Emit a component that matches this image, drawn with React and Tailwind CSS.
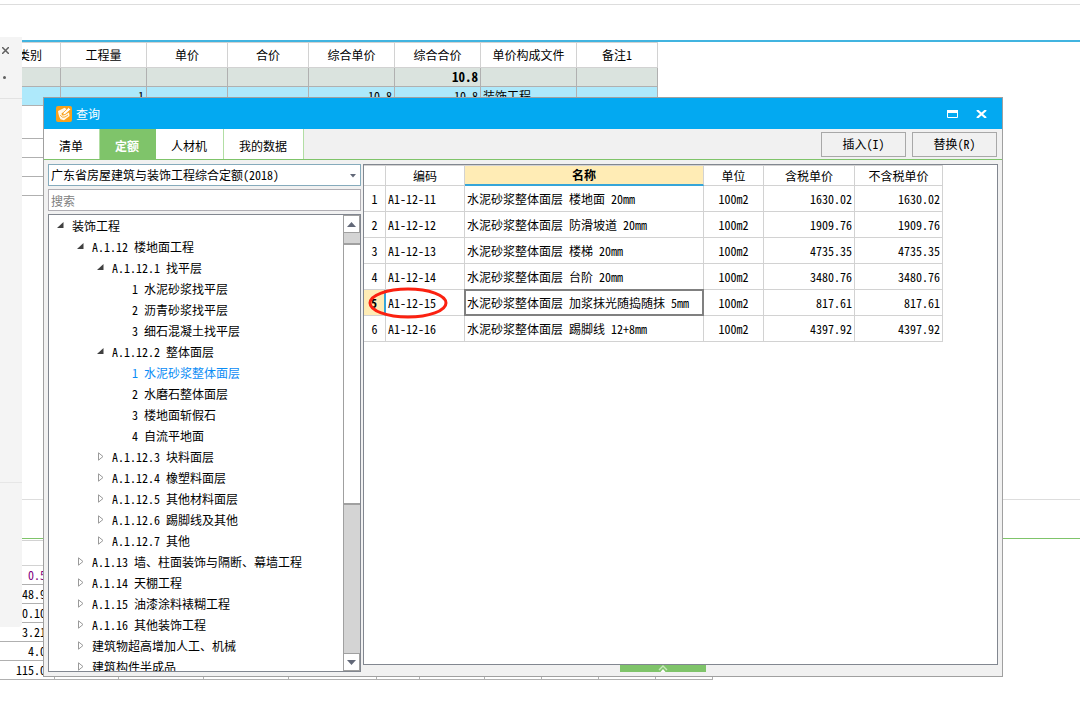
/**
 * Quota query dialog floating over the bill-of-quantities workspace.
 */
import { useState } from 'react';

const BILL_COLUMNS = [
  { name: '类别', width: 'w-[61px]' },
  { name: '工程量', width: 'w-[86px]' },
  { name: '单价', width: 'w-[81px]' },
  { name: '合价', width: 'w-[81px]' },
  { name: '综合单价', width: 'w-[86px]' },
  { name: '综合合价', width: 'w-[86px]' },
  { name: '单价构成文件', width: 'w-[96px]' },
  { name: '备注1', width: 'w-[81px]' },
];

const BILL_TOTAL = ['', '', '', '', '', '10.8', '', ''];
const BILL_ITEM = ['', '1', '', '', '10.8', '10.8', '装饰工程', ''];

const DETAIL_COLUMNS = [
  'w-[55px]', 'w-[64px]', 'w-[85px]', 'w-[85px]', 'w-[88px]', 'w-[43px]',
  'w-[65px]', 'w-[57px]', 'w-[57px]', 'w-[57px]', 'w-[57px]',
];

const DETAIL_VALUES = ['0.5', '48.9', '0.10', '3.21', '4.0', '115.0'];

const TABS = ['清单', '定额', '人材机', '我的数据'];

const TREE = [
  { level: 0, label: '装饰工程', state: 'open' },
  { level: 1, label: 'A.1.12 楼地面工程', state: 'open' },
  { level: 2, label: 'A.1.12.1 找平层', state: 'open' },
  { level: 3, label: '1 水泥砂浆找平层' },
  { level: 3, label: '2 沥青砂浆找平层' },
  { level: 3, label: '3 细石混凝土找平层' },
  { level: 2, label: 'A.1.12.2 整体面层', state: 'open' },
  { level: 3, label: '1 水泥砂浆整体面层' },
  { level: 3, label: '2 水磨石整体面层' },
  { level: 3, label: '3 楼地面斩假石' },
  { level: 3, label: '4 自流平地面' },
  { level: 2, label: 'A.1.12.3 块料面层', state: 'closed' },
  { level: 2, label: 'A.1.12.4 橡塑料面层', state: 'closed' },
  { level: 2, label: 'A.1.12.5 其他材料面层', state: 'closed' },
  { level: 2, label: 'A.1.12.6 踢脚线及其他', state: 'closed' },
  { level: 2, label: 'A.1.12.7 其他', state: 'closed' },
  { level: 1, label: 'A.1.13 墙、柱面装饰与隔断、幕墙工程', state: 'closed' },
  { level: 1, label: 'A.1.14 天棚工程', state: 'closed' },
  { level: 1, label: 'A.1.15 油漆涂料裱糊工程', state: 'closed' },
  { level: 1, label: 'A.1.16 其他装饰工程', state: 'closed' },
  { level: 1, label: '建筑物超高增加人工、机械', state: 'closed' },
  { level: 1, label: '建筑构件半成品', state: 'closed' },
];

const INDENT = ['pl-2', 'pl-7', 'pl-12', 'pl-[68px]'];

const QUOTAS = [
  { code: 'A1-12-11', name: '水泥砂浆整体面层 楼地面 20mm', price: '1630.02' },
  { code: 'A1-12-12', name: '水泥砂浆整体面层 防滑坡道 20mm', price: '1909.76' },
  { code: 'A1-12-13', name: '水泥砂浆整体面层 楼梯 20mm', price: '4735.35' },
  { code: 'A1-12-14', name: '水泥砂浆整体面层 台阶 20mm', price: '3480.76' },
  { code: 'A1-12-15', name: '水泥砂浆整体面层 加浆抹光随捣随抹 5mm', price: '817.61' },
  { code: 'A1-12-16', name: '水泥砂浆整体面层 踢脚线 12+8mm', price: '4397.92' },
];

function AppIcon() {
  return (
    <svg width="16" height="16" viewBox="0 0 16 16" aria-hidden="true">
      <rect width="16" height="16" rx="2" fill="#f9a11b" />
      <path d="M2 5 L8.5 1.8 L11 3.4 L5.5 7.5 L6 9.5 L8.5 9 L13 6.5 L13.5 10 L8 14.2 L4.5 13.2 L3.2 10.5 L2.5 8 Z" fill="#fff8e8" />
      <path d="M6.8 8.8 L7.2 6.8 L12.6 1.6 L14.8 3.4 L9 8.6 Z" fill="#fff" stroke="#f9a11b" strokeWidth="0.8" />
      <path d="M4.2 9 Q6 12.4 9 11 L12 9" fill="none" stroke="#f9a11b" strokeWidth="0.9" />
    </svg>
  );
}

function TreeArrow({ state }) {
  return (
    <svg width="7" height="9" viewBox="0 0 7 9" className="shrink-0" aria-hidden="true">
      {state === 'open' && <path d="M6.5 1 V7 H0 Z" fill="#404040" />}
      {state === 'closed' && <path d="M1.5 0.8 L6 4.5 L1.5 8.2 Z" fill="#fff" stroke="#9a9a9a" />}
    </svg>
  );
}

function BillTable() {
  const cell = 'p-0 px-[2px] border-r border-b border-[#b0b0b0]';

  return (
    <table className="table-fixed border-separate border-spacing-0 w-[658px] border-t border-[#d2d2d2]">
      <thead>
        <tr className="h-[25px]">
          {BILL_COLUMNS.map((c) => (
            <th key={c.name} className={`${c.width} p-0 font-normal border-r border-b border-[#d2d2d2]`}>
              {c.name}
            </th>
          ))}
        </tr>
      </thead>
      <tbody>
        <tr className="h-[19px] bg-[#dae3de] font-bold text-[13px]">
          {BILL_TOTAL.map((v, i) => (
            <td key={i} className={`${cell} text-right`}>{v}</td>
          ))}
        </tr>
        <tr className="h-[19px] bg-[#aee9fb]">
          {BILL_ITEM.map((v, i) => (
            <td key={i} className={`${cell} ${i === 6 ? 'text-left' : 'text-right'}`}>{v}</td>
          ))}
        </tr>
      </tbody>
    </table>
  );
}

function DetailTable() {
  return (
    <table className="table-fixed border-separate border-spacing-0 w-[713px]">
      <tbody>
        {DETAIL_VALUES.map((v, row) => (
          <tr key={v} className="h-[19px]">
            {DETAIL_COLUMNS.map((w, i) => (
              <td
                key={i}
                className={`${w} p-0 pr-2 text-right border-r border-b border-[#b0b0b0] ${row === 0 ? 'text-[#800080]' : ''}`}
              >
                {i === 0 ? v : ''}
              </td>
            ))}
          </tr>
        ))}
      </tbody>
    </table>
  );
}

function Workspace() {
  return (
    <div className="relative h-full flex flex-col">
      <div className="h-[5px] shrink-0 border-b border-[#dddddd]" />
      <div className="h-[35px] shrink-0" />
      <div className="h-[2px] shrink-0 ml-[22px] bg-[#41b4e0]" />
      <BillTable />
      <div className="h-[14px] shrink-0" />
      {[0, 1, 2, 3].map((i) => (
        <div key={i} className="h-[19px] shrink-0 w-[60px] border-b border-[#b0b0b0]" />
      ))}
      <div className="h-[304px] shrink-0 border-b border-[#dddddd]" />
      <div className="h-[38px] shrink-0" />
      <div className="h-px shrink-0 bg-[#7fc46a]" />
      <div className="h-[26px] shrink-0 w-[60px] border-y border-[#d2d2d2] mt-px" />
      <DetailTable />

      {/* Collapsed side panel, covers the left edge of both tables */}
      <aside className="absolute left-0 top-[37px] w-[22px] h-[590px] bg-[#f4f4f4] rounded-br-sm flex flex-col">
        <button aria-label="关闭面板" className="h-[27px] pl-[2px] text-[#606060]">
          <svg width="7" height="7" viewBox="0 0 7 7">
            <path d="M0 0 L7 7 M7 0 L0 7" stroke="currentColor" strokeWidth="1.5" />
          </svg>
        </button>
        <div className="h-[35px] border-b border-[#e2e2e2] pl-[3px] pt-3">
          <div className="size-[3px] rounded-full bg-[#606060]" />
        </div>
        <div className="h-[384px] border-b border-[#e6e6e6]" />
      </aside>
    </div>
  );
}

function TitleBar() {
  return (
    <header className="h-[31px] shrink-0 bg-[#03a9f1] text-white flex items-center pl-3 pr-[15px]">
      <AppIcon />
      <h1 className="ml-1 flex-1">查询</h1>
      <button aria-label="最大化" className="mr-[18px]">
        <svg width="11" height="8" viewBox="0 0 11 8" className="block">
          <path d="M0.5 0.5 H10.5 V7.5 H0.5 Z" fill="none" stroke="#fff" />
          <path d="M0 0 H11 V3 H0 Z" fill="#fff" />
        </svg>
      </button>
      <button aria-label="关闭">
        <svg width="11" height="8" viewBox="0 0 11 8" className="block">
          <path d="M1 0 L10 8 M10 0 L1 8" stroke="#fff" strokeWidth="2.2" />
        </svg>
      </button>
    </header>
  );
}

function TabBar({ active, onChange }) {
  return (
    <div className="h-[30px] shrink-0 flex items-stretch bg-[#f1f1f1]">
      <nav className="flex">
        {TABS.map((t) => (
          <button
            key={t}
            onClick={() => onChange(t)}
            className={`pl-[15px] pr-4 pt-[3px] border-r ${
              active === t
                ? 'bg-[#7fc46a] border-[#7fc46a] text-white font-bold'
                : 'bg-white border-[#b2dea4]'
            }`}
          >
            {t}
          </button>
        ))}
      </nav>
      <div className="ml-auto mr-[5px] flex items-center gap-[6px]">
        <button className="w-[85px] h-[25px] border border-[#a8a8a8] bg-[#f1f1f1]">插入(I)</button>
        <button className="w-[85px] h-[25px] border border-[#a8a8a8] bg-[#f1f1f1]">替换(R)</button>
      </div>
    </div>
  );
}

function ScrollBar() {
  return (
    <div className="w-[17px] shrink-0 flex flex-col border-l border-[#a0a0a0] bg-[#d4d4d4]">
      <button aria-label="向上滚动" className="h-[18px] shrink-0 flex items-center justify-center bg-white border-y border-r border-[#a0a0a0]">
        <svg width="9" height="5" viewBox="0 0 9 5"><path d="M4.5 0 L9 5 H0 Z" fill="#626878" /></svg>
      </button>
      <div className="flex-1 pt-[10px]">
        <div className="h-[262px] bg-white border-y-2 border-[#a0a0a0]" />
      </div>
      <button aria-label="向下滚动" className="h-[18px] shrink-0 flex items-center justify-center bg-white border-y border-r border-[#a0a0a0]">
        <svg width="9" height="5" viewBox="0 0 9 5"><path d="M0 0 H9 L4.5 5 Z" fill="#626878" /></svg>
      </button>
    </div>
  );
}

function QuotaTree() {
  const [selected, setSelected] = useState('1 水泥砂浆整体面层');

  return (
    <div className="flex-1 min-h-0 flex bg-white border border-[#828790]">
      <ul className="flex-1 min-w-0 overflow-hidden">
        {TREE.map((n) => (
          <li key={n.label}>
            <button
              onClick={() => setSelected(n.label)}
              className={`w-full h-[21px] flex items-center gap-2 whitespace-nowrap ${INDENT[n.level]} ${
                selected === n.label ? 'text-[#0a8cf5]' : ''
              }`}
            >
              <TreeArrow state={n.state} />
              <span className="whitespace-pre">{n.label}</span>
            </button>
          </li>
        ))}
      </ul>
      <ScrollBar />
    </div>
  );
}

function QuotaTable() {
  const cell = 'p-0 border-r border-b border-[#d2d2d2]';
  const current = 4;

  return (
    <table className="table-fixed border-separate border-spacing-0 w-[579px] border-t border-[#d2d2d2]">
      <thead>
        <tr className="h-5">
          <th className={`${cell} w-[22px]`} />
          <th className={`${cell} w-[79px] font-normal`}>编码</th>
          <th className="w-[239px] p-0 border-r border-r-[#d2d2d2] border-b-2 border-b-[#36a5d8] bg-[#ffecb5] font-bold">名称</th>
          <th className={`${cell} w-[60px] font-normal`}>单位</th>
          <th className={`${cell} w-[91px] font-normal`}>含税单价</th>
          <th className={`${cell} w-[88px] font-normal`}>不含税单价</th>
        </tr>
      </thead>
      <tbody>
        {QUOTAS.map((q, i) => (
          <tr key={q.code} className="h-[26px]">
            <td
              className={
                i === current
                  ? 'p-0 text-center font-bold bg-[#ffecb5] border-r-2 border-r-[#36a5d8] border-b border-b-[#d2d2d2]'
                  : `${cell} text-center`
              }
            >
              {i + 1}
            </td>
            <td className={`${cell} relative pl-[2px]`}>
              {q.code}
              {i === current && (
                <svg className="absolute z-10 -left-[18px] -top-[3px]" width="80" height="32" viewBox="0 0 80 32" aria-hidden="true">
                  <ellipse cx="40" cy="16" rx="38" ry="14" fill="none" stroke="#fb2110" strokeWidth="3" />
                </svg>
              )}
            </td>
            <td className={`${cell} relative pl-[2px]`}>
              <span className="whitespace-pre">{q.name}</span>
              {i === current && <div className="absolute -inset-px border-2 border-[#808080]" />}
            </td>
            <td className={`${cell} text-center`}>100m2</td>
            <td className={`${cell} text-right pr-[2px]`}>{q.price}</td>
            <td className={`${cell} text-right pr-[2px]`}>{q.price}</td>
          </tr>
        ))}
      </tbody>
    </table>
  );
}

function QueryDialog() {
  const [tab, setTab] = useState('定额');

  return (
    <section
      role="dialog"
      aria-label="查询"
      className="absolute left-[43px] right-[77px] top-[97px] bottom-12 flex flex-col border border-[#a0a0a0] bg-[#f1f1f1]"
    >
      <TitleBar />
      <TabBar active={tab} onChange={setTab} />
      <div className="h-px shrink-0 bg-[#7fc46a]" />
      <div className="flex-1 min-h-0 flex gap-[2px] p-1">
        <div className="w-[313px] shrink-0 flex flex-col">
          <div className="relative">
            <select
              aria-label="定额库"
              className="block w-full h-[22px] pl-[2px] appearance-none bg-white border border-[#86abbc]"
            >
              <option>广东省房屋建筑与装饰工程综合定额(2018)</option>
            </select>
            <svg className="absolute right-[5px] top-[10px] pointer-events-none" width="6" height="4" viewBox="0 0 6 4">
              <path d="M0 0 H6 L3 3.5 Z" fill="#626878" />
            </svg>
          </div>
          <input
            aria-label="搜索"
            placeholder="搜索"
            className="h-[22px] my-[3px] pl-[2px] bg-white border border-[#b0aeb4] placeholder:text-[#808080]"
          />
          <QuotaTree />
        </div>
        <div className="flex-1 min-w-0 flex flex-col">
          <div className="flex-1 bg-white border border-[#828790]">
            <QuotaTable />
          </div>
          <button aria-label="展开" className="w-[86px] h-[7px] ml-[257px] flex justify-center bg-[#7fc46a]">
            <svg width="10" height="7" viewBox="0 0 10 7">
              <path d="M1 5 L5 1 L9 5" fill="none" stroke="#c8e8bc" strokeWidth="1.4" />
              <path d="M2.5 7 L5 4 L7.5 7 Z" fill="#fff" />
            </svg>
          </button>
        </div>
      </div>
    </section>
  );
}

export default function App() {
  return (
    <main
      lang="zh-CN"
      className="relative h-screen min-h-[480px] overflow-hidden bg-white text-black text-[12px] leading-4 font-['Noto_Sans_CJK_SC',sans-serif] [font-feature-settings:'hwid']"
    >
      <Workspace />
      <QueryDialog />
    </main>
  );
}
